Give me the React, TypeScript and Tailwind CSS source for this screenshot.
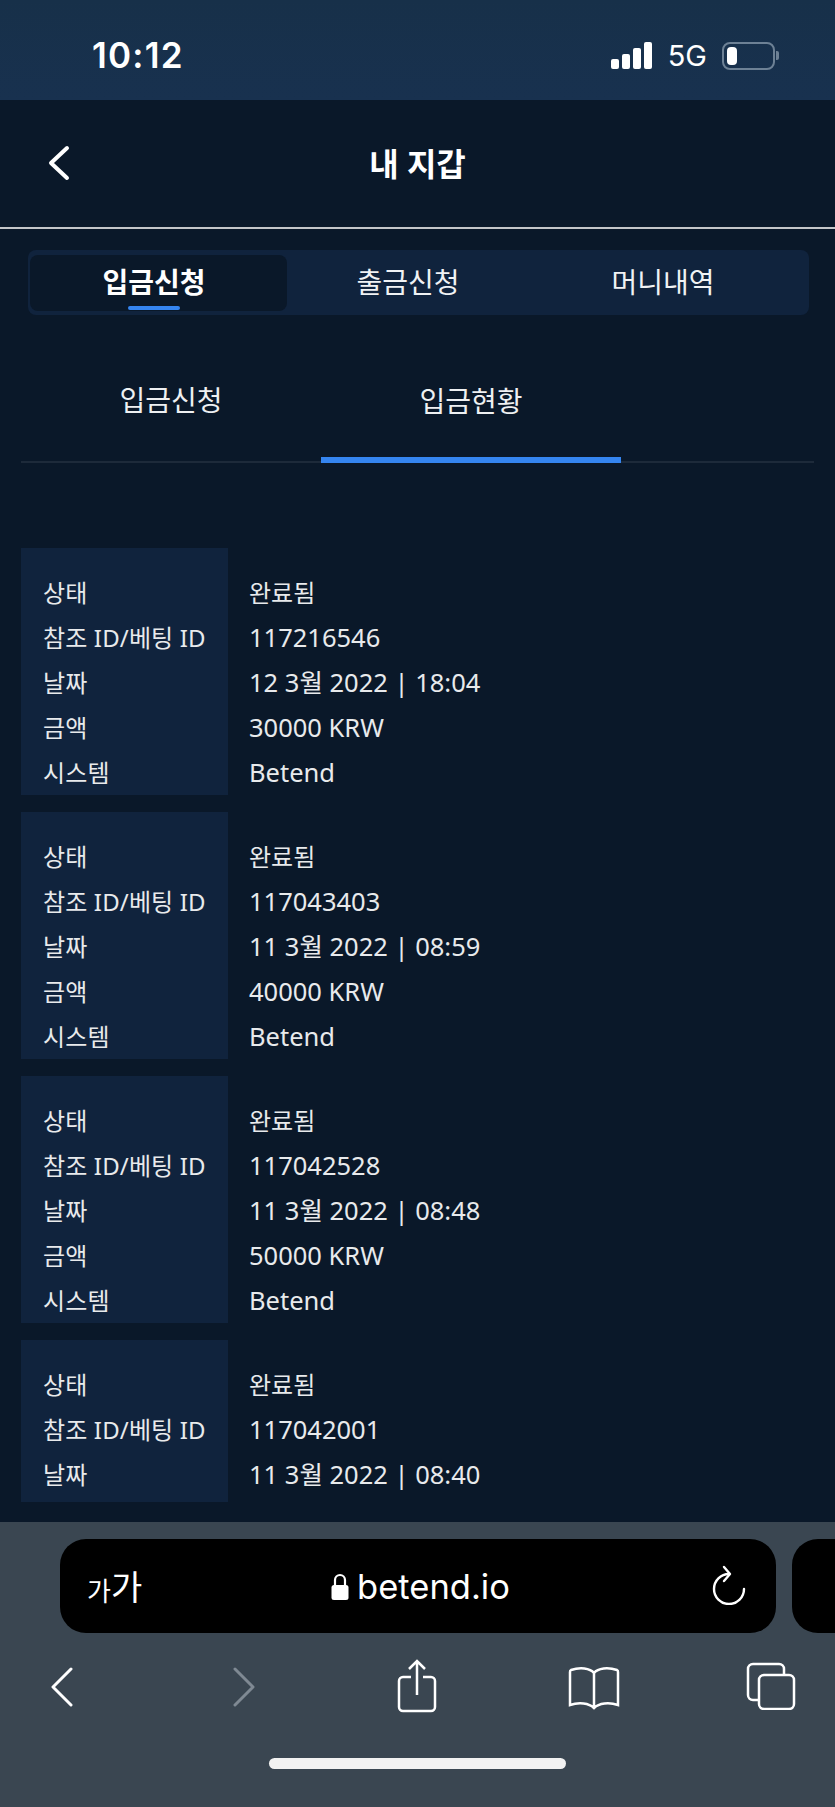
const FONT = "[font-family:'Noto_Sans','Noto_Sans_CJK_KR',sans-serif]";

const deposits = [
  { id: "117216546", date: "12 3월 2022 | 18:04", amount: "30000 KRW" },
  { id: "117043403", date: "11 3월 2022 | 08:59", amount: "40000 KRW" },
  { id: "117042528", date: "11 3월 2022 | 08:48", amount: "50000 KRW" },
  { id: "117042001", date: "11 3월 2022 | 08:40" },
];

function StatusBar() {
  return (
    <div className="h-[100px] shrink-0 flex items-center justify-between pl-[92px] pr-[56px] pt-[11px] bg-[linear-gradient(#173049,#18314f)] text-white">
      <span className="text-[35px] font-semibold tracking-[1.2px] leading-none [font-family:Inter,sans-serif]">10:12</span>
      <div className="flex items-center">
        <div className="flex items-end gap-[3px] h-[27px]">
          <span className="w-[8px] h-[10px] bg-white rounded-[2px]" />
          <span className="w-[8px] h-[15px] bg-white rounded-[2px]" />
          <span className="w-[8px] h-[21px] bg-white rounded-[2px]" />
          <span className="w-[8px] h-[27px] bg-white rounded-[2px]" />
        </div>
        <span className="ml-[16px] text-[29px] leading-none [font-family:Inter,sans-serif]">5G</span>
        <div className="ml-[15px] w-[53px] h-[28px] border-2 border-[#6d8195] rounded-[8px] p-[3px] flex">
          <span className="w-[10px] bg-white rounded-[4px]" />
        </div>
        <span className="ml-[1px] w-[3px] h-[9px] bg-[#6d8195] rounded-r-[2px]" />
      </div>
    </div>
  );
}

function Header() {
  return (
    <div className="relative h-[129px] flex items-center justify-center border-b-2 border-[#c4c6c9]">
      <svg className="absolute left-[48px] top-[45px]" width="22" height="36" viewBox="0 0 22 36" fill="none" stroke="white" strokeWidth="4" strokeLinecap="round" strokeLinejoin="round">
        <path d="M19 3L3 18l16 15" />
      </svg>
      <h1 className="text-[32px] font-bold text-white">내 지갑</h1>
    </div>
  );
}

function Tabs() {
  return (
    <div className="ml-[28px] mr-[26px] mt-[21px] h-[65px] rounded-[8px] bg-[#10233d] flex pt-[5px] pb-[4px] pl-[2px] text-[28px] text-[#f0f2f4]">
      <div className="relative w-[257px] rounded-[8px] bg-[#0a1829] flex items-center justify-center pr-[9px] pb-[3px] font-bold text-white">
        <span>입금신청</span>
        <span className="absolute left-[98px] bottom-[1px] w-[52px] h-[4px] rounded-full bg-[#3585f0]" />
      </div>
      <div className="w-[254px] flex items-center justify-center pb-[3px] pr-[12px]">출금신청</div>
      <div className="flex-1 flex items-center justify-center pb-[3px] pr-[24px]">머니내역</div>
    </div>
  );
}

function SubTabs() {
  return (
    <div className="mx-[21px] mt-[31px] h-[117px] border-b-2 border-[#1d2a3a] flex text-[28px] text-[#eef0f2]">
      <div className="w-[300px] flex items-center justify-center pb-[7px]">입금신청</div>
      <div className="w-[300px] -mb-[2px] flex items-center justify-center pb-[1px] border-b-[6px] border-[#3585f0]">입금현황</div>
    </div>
  );
}

function Row({ label, value }: { label: string; value: string }) {
  return (
    <>
      <div className="bg-[#10233d] pl-[22px] h-[45px] flex items-center text-[24px] tracking-[0.15px]">{label}</div>
      <div className={`pl-[21px] h-[45px] flex items-center ${value === "완료됨" ? "text-[24px]" : "text-[25.5px]"}`}>{value}</div>
    </>
  );
}

function DepositCard({ id, date, amount }: { id: string; date: string; amount?: string }) {
  return (
    <div className="grid grid-cols-[207px_1fr] text-[#e8eaec]">
      <div className="bg-[#10233d] h-[22px]" />
      <div />
      <Row label="상태" value="완료됨" />
      <Row label="참조 ID/베팅 ID" value={id} />
      <Row label="날짜" value={date} />
      {amount && <Row label="금액" value={amount} />}
      {amount && <Row label="시스템" value="Betend" />}
      {/* last card runs under the browser bar, only its top part shows */}
      {!amount && <div className="bg-[#10233d] h-[5px]" />}
    </div>
  );
}

function SafariBar() {
  return (
    <div className="h-[285px] shrink-0 bg-[#3a4651] text-white">
      <div className="flex gap-[16px] pl-[60px] pt-[17px]">
        <div className="w-[716px] h-[94px] shrink-0 rounded-[26px] bg-black flex items-center justify-between pl-[27px] pr-[30px]">
          <span className="flex items-end w-[60px] [font-family:'Noto_Sans_CJK_KR',sans-serif]">
            <span className="text-[26px] leading-none">가</span>
            <span className="text-[34px] leading-none">가</span>
          </span>
          <span className="flex items-center gap-[7px] -ml-[19px] mt-[2px]">
            <svg width="20" height="28" viewBox="0 0 19 28">
              <path d="M4.5 13V7a5 5 0 0 1 10 0v6" fill="none" stroke="white" strokeWidth="2.2" />
              <rect x="1" y="12" width="17" height="15" rx="2.5" fill="white" />
            </svg>
            <span className="text-[34.5px] leading-none [font-family:Inter,sans-serif]">betend.io</span>
          </span>
          <svg className="-mt-[3px]" width="34" height="40" viewBox="0 0 34 40" fill="none" stroke="white" strokeWidth="2.4" strokeLinecap="round" strokeLinejoin="round">
            <path d="M17 9A15 15 0 1 0 32 24" />
            <path d="M12 2l6 7-6 7" />
          </svg>
        </div>
        <div className="w-[100px] h-[94px] shrink-0 rounded-l-[26px] bg-black" />
      </div>
      <div className="relative h-[100px] mt-[26px]">
        <svg className="absolute left-[50px] top-[8px]" width="24" height="40" viewBox="0 0 24 40" fill="none" stroke="white" strokeWidth="3" strokeLinecap="round" strokeLinejoin="round">
          <path d="M21 2L3 20l18 18" />
        </svg>
        <svg className="absolute left-[232px] top-[8px]" width="24" height="40" viewBox="0 0 24 40" fill="none" stroke="#7f8993" strokeWidth="3" strokeLinecap="round" strokeLinejoin="round">
          <path d="M3 2l18 18L3 38" />
        </svg>
        <svg className="absolute left-[397px] top-[0px]" width="44" height="54" viewBox="0 0 44 54" fill="none" stroke="white" strokeWidth="2.5">
          <path d="M14 18H6a4 4 0 0 0-4 4v26a4 4 0 0 0 4 4h28a4 4 0 0 0 4-4V22a4 4 0 0 0-4-4h-8" />
          <path d="M20 36V2M12 10l8-8 8 8" />
        </svg>
        <svg className="absolute left-[568px] top-[7px]" width="52" height="44" viewBox="0 0 52 44" fill="none" stroke="white" strokeWidth="2.5">
          <path d="M26 7C22 2 12 1 3 4a2 2 0 0 0-1 2v33c9-3 19-2 24 3 5-5 15-6 24-3V6a2 2 0 0 0-1-2c-9-3-19-2-23 3zM26 7v35" />
        </svg>
        <svg className="absolute left-[746px] top-[3px]" width="50" height="48" viewBox="0 0 50 48" fill="none" stroke="white" strokeWidth="2.5">
          <rect x="13" y="13" width="35" height="34" rx="5" />
          <path d="M13 38H7a5 5 0 0 1-5-5V7a5 5 0 0 1 5-5h26a5 5 0 0 1 5 5v6" />
        </svg>
      </div>
      <div className="mt-[-1px] ml-[269px] w-[297px] h-[11px] rounded-full bg-[#f2f2f2]" />
    </div>
  );
}

export default function App() {
  return (
    <div className={`w-[835px] h-[1807px] flex flex-col overflow-hidden bg-[#0a1829] ${FONT}`}>
      <StatusBar />
      <Header />
      <Tabs />
      <SubTabs />
      <main className="flex-1 min-h-0 overflow-hidden px-[21px] pt-[85px] flex flex-col gap-[17px]">
        {deposits.map((d) => (
          <DepositCard key={d.id} {...d} />
        ))}
      </main>
      <SafariBar />
    </div>
  );
}
